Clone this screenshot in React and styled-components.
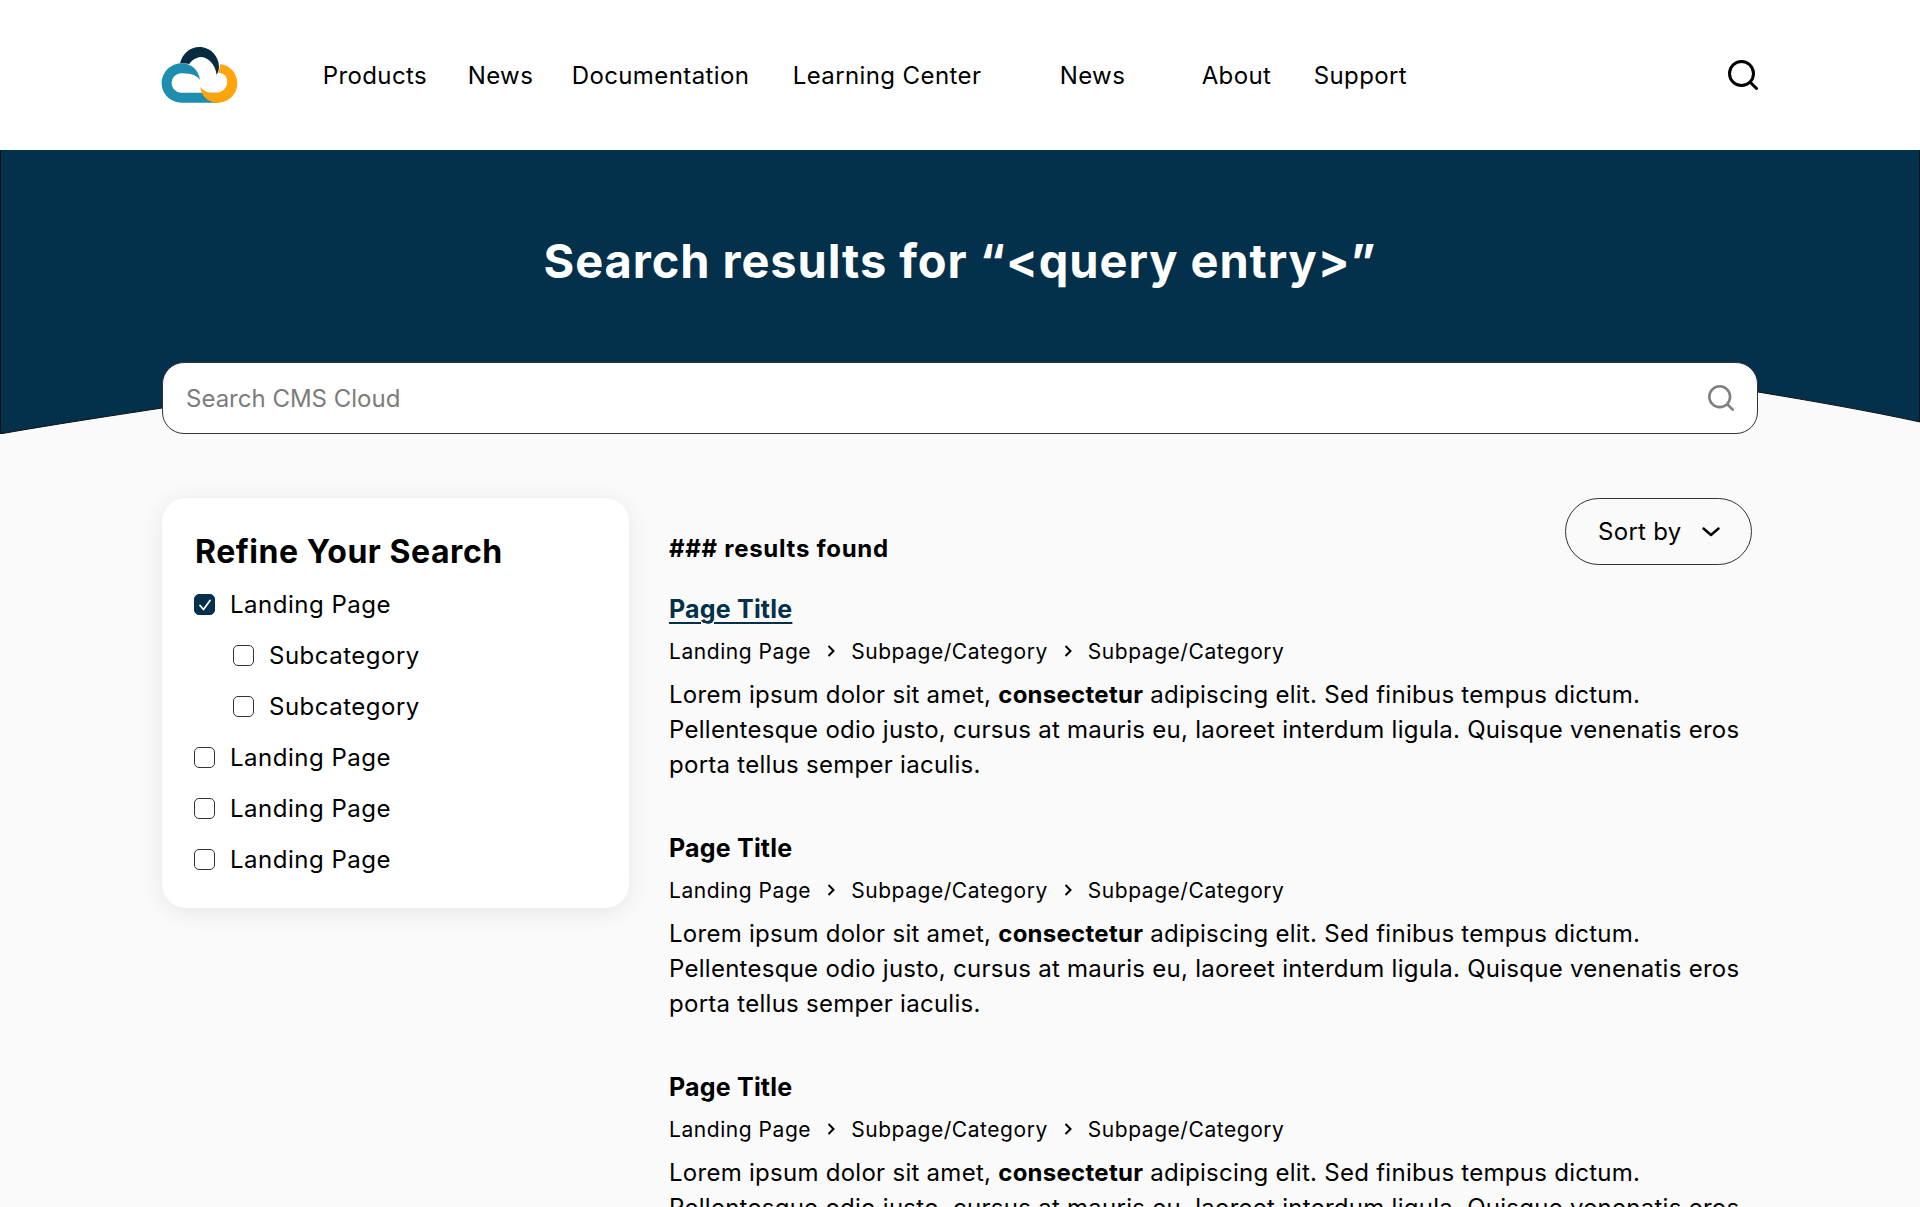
import React from 'react';
import styled, { createGlobalStyle } from 'styled-components';

const Global = createGlobalStyle`
  html, body { margin: 0; padding: 0; background: #fafafa; overflow: hidden; }
  * { box-sizing: border-box; }
  body { font-family: "Inter", "Noto Sans", sans-serif; color: #000; }
`;
const Page = styled.div`width: 1920px; height: 1207px; overflow: hidden; background: #fafafa;`;
const Header = styled.header`
  height: 150px; background: #fff; padding: 0 162px;
  display: flex; align-items: center; justify-content: space-between;
`;
const Logo = styled.svg`display: block; width: 78.67px; height: 58.33px; margin-left: -2px; margin-top: 1px;`;
const Nav = styled.nav`
  display: grid; grid-template-columns: 145px 104px 221px 267px 142px 112px 93px;
  margin: 2px auto 0 84px; line-height: 32px;
`;
const NavLink = styled.a`white-space: nowrap; color: #000; font-size: 24px; letter-spacing: .4px;`;
const Hero = styled.section`
  position: relative; height: 284px; background: #03304a; padding-top: 80px; overflow: hidden;
`;
const Curve = styled.svg`position: absolute; left: 0; top: 0; width: 1920px; height: 284px;`;
const Title = styled.h1`
  position: relative; margin: 0; text-align: center; color: #fff;
  font-size: 47px; line-height: 62px; font-weight: 700; letter-spacing: .92px;
`;
const SearchBox = styled.div`
  position: relative; margin: 70px 162px 0; height: 72px; background: #fff;
  border: 1px solid #333; border-radius: 22px; display: flex; align-items: center; padding: 0 23px 0 23px;
`;
const SearchInput = styled.input`
  flex: 1; border: 0; outline: 0; padding: 0; background: transparent; font: inherit; font-size: 24px; letter-spacing: 0;
  &::placeholder { color: #7c7c7c; opacity: 1; }
`;
const Main = styled.main`
  display: grid; grid-template-columns: 467px 1089px; column-gap: 40px; padding: 64px 162px 0;
`;
const Panel = styled.aside`
  height: 410px; background: #fff; border-radius: 24px; padding: 33px 33px 22px;
  box-shadow: 0 4px 24px rgba(0,0,0,.08);
`;
const PanelTitle = styled.h2`margin: 0 0 7px; font-size: 32px; line-height: 41px; font-weight: 700; letter-spacing: .55px;`;
const FilterRow = styled.label`
  height: 51px; display: flex; align-items: center; gap: 15px; font-size: 24px; letter-spacing: .5px;
  margin-left: ${p => p.$sub ? '38px' : '-1px'};
`;
const Box = styled.span`
  width: 21px; height: 21px; flex: none; border-radius: 5px; display: flex; align-items: center; justify-content: center;
  border: 1.5px solid ${p => p.$on ? '#03304a' : '#333'}; background: ${p => p.$on ? '#03304a' : '#fff'};
`;
const ResultsHead = styled.div`height: 67px; display: flex; align-items: flex-end; justify-content: space-between; padding-right: 6px;`;
const Count = styled.div`font-size: 24px; line-height: 32px; font-weight: 700; letter-spacing: .72px;`;
const SortBtn = styled.button`
  width: 187px; height: 67px; border: 1px solid #333; border-radius: 34px; background: transparent;
  display: flex; align-items: center; gap: 20px; padding: 0 0 0 32px; font: inherit; font-size: 24px; letter-spacing: .3px; color: #000;
`;
const ResultList = styled.div`margin-top: 26px; display: flex; flex-direction: column; gap: 48px;`;
const ResultTitle = styled.a`
  display: block; font-size: 25px; line-height: 36px; font-weight: 700; letter-spacing: .2px;
  color: ${p => p.$link ? '#03304a' : '#000'}; text-decoration: ${p => p.$link ? 'underline' : 'none'};
  text-underline-offset: 4px;
`;
const Crumbs = styled.div`margin-top: 9px; height: 30px; display: flex; align-items: center; gap: 16px; font-size: 21px; letter-spacing: .55px;`;
const Para = styled.p`margin: 11px 0 0; font-size: 24px; line-height: 35px; letter-spacing: .27px;`;

const Mag = ({ size, color, w = 3 }) => (
  <svg width={size} height={size} viewBox="0 0 30 30" fill="none" stroke={color} strokeWidth={w} strokeLinecap="round">
    <circle cx="13.5" cy="13.5" r="12" /><path d="M22.5 22.5L28.5 28.5" />
  </svg>
);
const Check = () => (
  <svg width="14" height="14" viewBox="0 0 14 14" fill="none" stroke="#fff" strokeWidth="1.8" strokeLinecap="round" strokeLinejoin="round"><path d="M2 7.5L5.5 11.5L12 2.5" /></svg>
);
const Crumb = () => (
  <svg width="8" height="12" viewBox="0 0 8 12" fill="none" stroke="#000" strokeWidth="2"><path d="M1.5 1L6.5 6L1.5 11" /></svg>
);
const nav = ['Products', 'News', 'Documentation', 'Learning Center', 'News', 'About', 'Support'];
const filters = [['Landing Page', 0, 1], ['Subcategory', 1, 0], ['Subcategory', 1, 0], ['Landing Page', 0, 0], ['Landing Page', 0, 0], ['Landing Page', 0, 0]];

const Result = ({ link }) => (
  <article>
    <ResultTitle $link={link}>Page Title</ResultTitle>
    <Crumbs><span>Landing Page</span><Crumb /><span>Subpage/Category</span><Crumb /><span>Subpage/Category</span></Crumbs>
    <Para>Lorem ipsum dolor sit amet, <b>consectetur</b> adipiscing elit. Sed finibus tempus dictum.<br />Pellentesque odio justo, cursus at mauris eu, laoreet interdum ligula. Quisque venenatis eros<br />porta tellus semper iaculis.</Para>
  </article>
);

export default function App() {
  return (
    <Page>
      <Global />
      <Header>
        <Logo viewBox="60 78 236 175">
          <path fill="#062b40" d="M120 130C128 100 150 81 178 81C212 81 238 110 237 142C237 150 234 158 230 165C228 150 222 135 212 125C200 113 185 108 172 113C160 117 152 125 148 132C140 130 130 129 120 130Z" />
          <path fill="#1d8eb0" d="M125 130C155 130 175 150 180 180C172 170 160 160 125 160C108 160 95 173 95 189C95 205 108 218 125 218L235 218L235 248L125 248C92 248 65 222 65 190C65 157 92 130 125 130Z" />
          <path fill="#ffa40b" d="M240 133C270 135 292 160 292 190C292 222 266 248 235 248C205 248 183 228 181 200C190 212 205 219 222 219C245 219 262 205 262 185C262 170 252 158 235 158C238 150 240 142 240 133Z" />
        </Logo>
        <Nav>{nav.map((n, i) => <NavLink key={i}>{n}</NavLink>)}</Nav>
        <Mag size={30} color="#000" />
      </Header>
      <Hero>
        <Curve viewBox="0 150 1920 284">
          <path fill="none" stroke="#111" strokeWidth="1" d="M.5 150V434M1919.5 150V422" />
          <path fill="#fafafa" stroke="#111" strokeWidth="1" d="M-2 434.3C50 425 110 416 162 408C400 372 800 364 1010 364C1300 364 1600 366 1758 392C1810 400.6 1870 411 1922 422.4L1922 440L-2 440Z" />
        </Curve>
        <Title>Search results for “&lt;query entry&gt;”</Title>
        <SearchBox>
          <SearchInput placeholder="Search CMS Cloud" />
          <Mag size={26} color="#808080" />
        </SearchBox>
      </Hero>
      <Main>
        <Panel>
          <PanelTitle>Refine Your Search</PanelTitle>
          {filters.map(([t, s, c], i) => (
            <FilterRow key={i} $sub={!!s}><Box $on={!!c}>{c ? <Check /> : null}</Box>{t}</FilterRow>
          ))}
        </Panel>
        <section>
          <ResultsHead>
            <Count>### results found</Count>
            <SortBtn>Sort by
              <svg width="18" height="10" viewBox="0 0 18 10" fill="none" stroke="#000" strokeWidth="2.4" strokeLinecap="round" strokeLinejoin="round"><path d="M1.5 1.5L9 8L16.5 1.5" /></svg>
            </SortBtn>
          </ResultsHead>
          <ResultList>
            <Result link /><Result /><Result />
          </ResultList>
        </section>
      </Main>
    </Page>
  );
}
